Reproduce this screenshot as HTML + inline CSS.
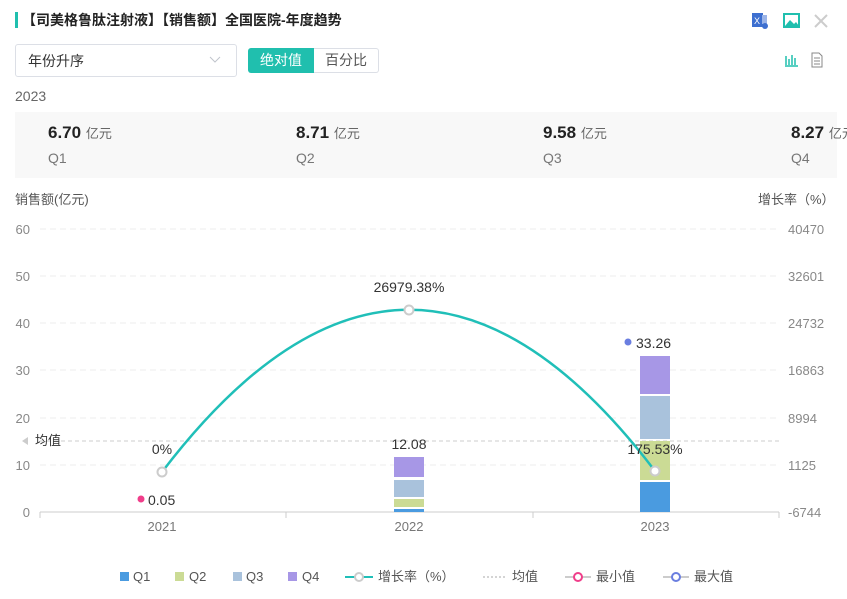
<!DOCTYPE html>
<html><head><meta charset="utf-8"><style>
body{margin:0;width:847px;height:599px;background:#fff;font-family:"Liberation Sans","Noto Sans CJK SC",sans-serif;position:relative;overflow:hidden;color:#333}
.a{position:absolute;white-space:nowrap}
</style></head><body>
<div class="a" style="left:15px;top:12px;width:3px;height:16px;background:#20bfae"></div>
<div class="a" style="left:22px;top:10px;font-size:14px;font-weight:bold;color:#222">【司美格鲁肽注射液】【销售额】全国医院-年度趋势</div>
<svg class="a" style="left:750px;top:11px" width="20" height="20"><rect x="2" y="2" width="11" height="14" fill="#3d6fd0"/><text x="4" y="13" font-size="9" fill="#fff" font-family="Liberation Sans">X</text><rect x="12" y="4" width="5" height="9" fill="#9bb4e8"/><circle cx="15" cy="15" r="3" fill="#3d6fd0"/></svg>
<svg class="a" style="left:782px;top:11px" width="20" height="20"><rect x="2" y="3" width="15" height="13" fill="none" stroke="#20bfae" stroke-width="2"/><path d="M3 15 L8 9 L12 13 L14 11 L17 15Z" fill="#20bfae"/></svg>
<svg class="a" style="left:812px;top:12px" width="18" height="18"><path d="M3 3L15 15M15 3L3 15" stroke="#ccc" stroke-width="2"/></svg>
<div class="a" style="left:15px;top:44px;width:220px;height:31px;border:1px solid #dcdfe6;border-radius:3px;"></div>
<div class="a" style="left:28px;top:51px;font-size:14px;color:#333">年份升序</div>
<svg class="a" style="left:208px;top:54px" width="14" height="10"><path d="M2 3L7 8L12 3" stroke="#c0c4cc" fill="none"/></svg>
<div class="a" style="left:248px;top:48px;width:66px;height:25px;background:#20bfae;border-radius:3px 0 0 3px;color:#fff;font-size:14px;text-align:center;line-height:25px">绝对值</div>
<div class="a" style="left:314px;top:48px;width:64px;height:23px;border:1px solid #dcdfe6;border-left:none;border-radius:0 3px 3px 0;font-size:14px;text-align:center;line-height:23px;color:#555">百分比</div>
<svg class="a" style="left:783px;top:52px" width="16" height="16"><path d="M2 14H15M3 4V13M6 7V13M9 3V13M12 6V13" stroke="#20bfae" stroke-width="1.5" fill="none"/></svg>
<svg class="a" style="left:810px;top:52px" width="14" height="16"><path d="M2 1H9L12 4V15H2Z" fill="none" stroke="#888"/><path d="M4 6H10M4 9H10M4 12H10" stroke="#888"/></svg>
<div class="a" style="left:15px;top:88px;font-size:14px;color:#666">2023</div>
<div class="a" style="left:15px;top:112px;width:822px;height:66px;background:#f8f8f8"></div>
<div class="a" style="left:48px;top:123px;font-size:17px;font-weight:bold;color:#222">6.70 <span style="font-size:13px;font-weight:normal;color:#666">亿元</span></div>
<div class="a" style="left:296px;top:123px;font-size:17px;font-weight:bold;color:#222">8.71 <span style="font-size:13px;font-weight:normal;color:#666">亿元</span></div>
<div class="a" style="left:543px;top:123px;font-size:17px;font-weight:bold;color:#222">9.58 <span style="font-size:13px;font-weight:normal;color:#666">亿元</span></div>
<div class="a" style="left:791px;top:123px;font-size:17px;font-weight:bold;color:#222">8.27 <span style="font-size:13px;font-weight:normal;color:#666">亿元</span></div>
<div class="a" style="left:48px;top:150px;font-size:14px;color:#777">Q1</div>
<div class="a" style="left:296px;top:150px;font-size:14px;color:#777">Q2</div>
<div class="a" style="left:543px;top:150px;font-size:14px;color:#777">Q3</div>
<div class="a" style="left:791px;top:150px;font-size:14px;color:#777">Q4</div>
<div class="a" style="left:15px;top:189px;font-size:13px;color:#555">销售额(亿元)</div>
<div class="a" style="left:758px;top:189px;font-size:13px;color:#555">增长率（%）</div>
<svg class="a" style="left:0;top:0" width="847" height="599" font-family="Liberation Sans,Noto Sans CJK SC,sans-serif">
<g stroke="#eee" stroke-dasharray="6,4"><path d="M40 229H779M40 276H779M40 323H779M40 370H779M40 418H779M40 465H779"/></g>
<path d="M40 441H779" stroke="#ccc" stroke-dasharray="4,3"/>
<path d="M40 512H779M40 512V518M286 512V518M533 512V518M779 512V518" stroke="#ccc"/>
<g font-size="13" fill="#888" text-anchor="end"><text x="30" y="234">60</text><text x="30" y="281">50</text><text x="30" y="328">40</text><text x="30" y="375">30</text><text x="30" y="423">20</text><text x="30" y="470">10</text><text x="30" y="517">0</text></g>
<g font-size="13" fill="#888"><text x="788" y="234">40470</text><text x="788" y="281">32601</text><text x="788" y="328">24732</text><text x="788" y="375">16863</text><text x="788" y="423">8994</text><text x="788" y="470">1125</text><text x="788" y="517">-6744</text></g>
<g font-size="13" fill="#777" text-anchor="middle"><text x="162" y="531">2021</text><text x="409" y="531">2022</text><text x="655" y="531">2023</text></g>
<path d="M22 441l6-4v8z" fill="#ccc"/><text x="35" y="445" font-size="13" fill="#333">均值</text>
<rect x="394" y="509" width="30" height="3" fill="#4a9be0"/>
<rect x="394" y="499" width="30" height="8" fill="#cbdb95"/>
<rect x="394" y="480" width="30" height="17" fill="#a9c2dc"/>
<rect x="394" y="457" width="30" height="20" fill="#a797e6"/>
<rect x="640" y="482" width="30" height="30" fill="#4a9be0"/>
<rect x="640" y="441" width="30" height="39" fill="#cbdb95"/>
<rect x="640" y="396" width="30" height="43" fill="#a9c2dc"/>
<rect x="640" y="356" width="30" height="38" fill="#a797e6"/>
<path d="M162 472Q409 148 655 471" stroke="#20bfb8" stroke-width="2.5" fill="none"/>
<g fill="#fff" stroke="#ccc" stroke-width="2"><circle cx="162" cy="472" r="4.5"/><circle cx="409" cy="310" r="4.5"/><circle cx="655" cy="471" r="4.5"/></g>
<g font-size="14" fill="#333" text-anchor="middle"><text x="162" y="454">0%</text><text x="409" y="292">26979.38%</text><text x="655" y="454">175.53%</text><text x="409" y="449">12.08</text></g>
<circle cx="141" cy="499" r="3.5" fill="#f03e8a"/><text x="148" y="505" font-size="14" fill="#333">0.05</text>
<circle cx="628" cy="342" r="3.5" fill="#6a7ee0"/><text x="636" y="348" font-size="14" fill="#333">33.26</text>
<g font-size="13" fill="#555">
<rect x="120" y="572" width="9" height="9" fill="#4a9be0"/><text x="133" y="581">Q1</text>
<rect x="175" y="572" width="9" height="9" fill="#cbdb95"/><text x="189" y="581">Q2</text>
<rect x="233" y="572" width="9" height="9" fill="#a9c2dc"/><text x="246" y="581">Q3</text>
<rect x="288" y="572" width="9" height="9" fill="#a797e6"/><text x="302" y="581">Q4</text>
<path d="M345 577H373" stroke="#20bfb8" stroke-width="2"/><circle cx="359" cy="577" r="4" fill="#fff" stroke="#ccc" stroke-width="2"/><text x="378" y="581">增长率（%）</text>
<path d="M483 577H507" stroke="#aaa" stroke-dasharray="2,2"/><text x="512" y="581">均值</text>
<path d="M565 577H591" stroke="#ccc" stroke-width="2"/><circle cx="578" cy="577" r="4" fill="#fff" stroke="#f03e8a" stroke-width="2"/><text x="596" y="581">最小值</text>
<path d="M663 577H689" stroke="#ccc" stroke-width="2"/><circle cx="676" cy="577" r="4" fill="#fff" stroke="#6a7ee0" stroke-width="2"/><text x="694" y="581">最大值</text>
</g>
</svg>
</body></html>
